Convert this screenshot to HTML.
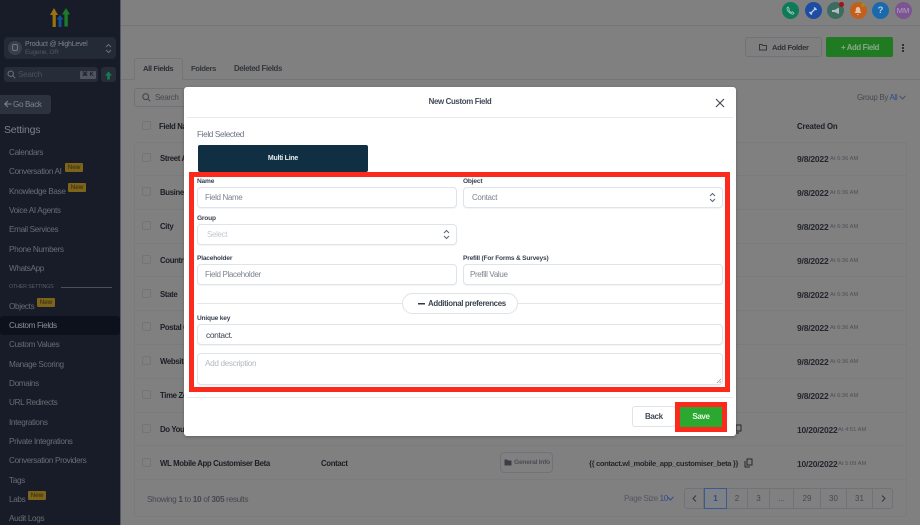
<!DOCTYPE html>
<html><head><meta charset="utf-8"><title>New Custom Field</title>
<style>
*{box-sizing:border-box}
html,body{margin:0;padding:0}
body{width:920px;height:525px;overflow:hidden;position:relative;background:#808081;font-family:"Liberation Sans",sans-serif}
.a,.t{position:absolute}
.t{white-space:nowrap;line-height:12px;height:12px;letter-spacing:-.35px}
.s{font-size:8.2px;color:#686d75;left:9px;margin-top:1px}
.new{position:absolute;background:#7d6418;color:#2c2a18;font-size:6.4px;line-height:9px;height:9px;width:18px;text-align:center;border-radius:1px}
.b{font-weight:bold;font-size:7.8px;color:#1b1e24;left:160px;margin-top:1px}
.d{font-weight:bold;font-size:8.500px;color:#23262c;left:797px;letter-spacing:-.2px;margin-top:.5px}
.m{font-size:5.8px;color:#4c4f55;left:830px;letter-spacing:0;margin-top:1px}
.cb{position:absolute;left:142px;width:9px;height:9px;border:1px solid #727478;border-radius:2px}
.ln{position:absolute;left:134px;width:773px;height:1px;background:#7a7b7d}
.inp{position:absolute;background:#fff;border:1px solid #dfe3ea;border-radius:4px;box-shadow:0 1px 1px rgba(20,30,50,.05)}
.lab{font-size:6.6px;font-weight:bold;color:#3b4350;left:197px;letter-spacing:-.2px}
.ph{font-size:8px;color:#7c8490}
.pg{position:absolute;top:488px;height:21px;border-right:1px solid #6f7279;text-align:center;font-size:8px;line-height:21px;color:#45484f}
.ic{position:absolute;top:2px;width:17px;height:17px;border-radius:50%;text-align:center;color:#b9c4cc;font-size:9px;line-height:17px;font-weight:bold}
</style></head><body>

<!-- app chrome -->
<div class="a" style="left:121px;top:25px;width:799px;height:1px;background:#747578"></div>
<div class="a" style="left:121px;top:79px;width:799px;height:1px;background:#747578"></div>

<!-- sidebar -->
<div class="a" style="left:0;top:0;width:120px;height:525px;background:#171c28"></div>
<div class="a" style="left:120px;top:0;width:1px;height:525px;background:#555b66"></div>
<svg class="a" style="left:48px;top:6px" width="24" height="22" viewBox="0 0 24 22">
<path d="M6 2 10 9H7.800V21H4.600V9H2z" fill="#9a720e"/>
<path d="M18 2 22 8.500H19.800V20.500H16.400V8.500H14z" fill="#1d7a28"/>
<path d="M12 9 15.500 13.500H13.500V21H10.500V13.500H8.500z" fill="#134f93"/>
</svg>
<div class="a" style="left:4px;top:37px;width:112px;height:22px;background:#242a36;border-radius:4px"></div>
<div class="a" style="left:8px;top:41px;width:14px;height:14px;border-radius:50%;background:#3a404b"></div>
<div class="a" style="left:12px;top:44px;width:6px;height:7px;border:1px solid #737780;border-radius:2px"></div>
<div class="t" style="left:25px;top:39px;font-size:7px;color:#7f838b;letter-spacing:-.2px">Product @ HighLevel</div>
<div class="t" style="left:25px;top:47px;font-size:6.4px;color:#545964;letter-spacing:-.15px">Eugene, OR</div>
<svg class="a" style="left:105px;top:43px" width="7" height="11" viewBox="0 0 7 11"><path d="M1 4 3.500 1.500 6 4M1 7 3.500 9.500 6 7" fill="none" stroke="#6a6e77"/></svg>
<div class="a" style="left:4px;top:67px;width:94px;height:15px;background:#262c38;border-radius:3px"></div>
<svg class="a" style="left:7px;top:70px" width="9" height="9" viewBox="0 0 9 9"><circle cx="3.700" cy="3.700" r="2.700" fill="none" stroke="#6d717a"/><path d="M5.800 5.800 8.300 8.300" stroke="#6d717a"/></svg>
<div class="t" style="left:18px;top:68.500px;font-size:8.200px;color:#4d525d">Search</div>
<div class="a" style="left:80px;top:71px;width:16px;height:8px;background:#505560;border-radius:1px;color:#1c2029;font-size:6px;line-height:8px;text-align:center;font-weight:bold">⌘ K</div>
<div class="a" style="left:101px;top:67px;width:15px;height:15px;background:#262c38;border-radius:3px"></div>
<svg class="a" style="left:104px;top:70.500px" width="9" height="9" viewBox="0 0 9 9"><path d="M4.500 .5 8 4.500H5.800V8.500H3.200V4.500H1z" fill="#197a50"/></svg>
<div class="a" style="left:-4px;top:95px;width:55px;height:19px;background:#2c323e;border-radius:3px"></div>
<svg class="a" style="left:4px;top:100px" width="8" height="8" viewBox="0 0 8 8"><path d="M7.500 4H1M3.800 1 .8 4 3.800 7" fill="none" stroke="#80848c" stroke-width="1.100"/></svg>
<div class="t" style="left:13px;top:98.500px;font-size:8.100px;color:#80848c">Go Back</div>
<div class="t" style="left:4px;top:124px;font-size:10.500px;line-height:12px;color:#7c8088;letter-spacing:-.2px">Settings</div>

<div class="t s" style="top:146px">Calendars</div>
<div class="t s" style="top:165px">Conversation AI</div><div class="new" style="left:65px;top:163px">New</div>
<div class="t s" style="top:185px">Knowledge Base</div><div class="new" style="left:68px;top:183px">New</div>
<div class="t s" style="top:204px">Voice AI Agents</div>
<div class="t s" style="top:223px">Email Services</div>
<div class="t s" style="top:243px">Phone Numbers</div>
<div class="t s" style="top:262px">WhatsApp</div>
<div class="t" style="left:9px;top:281px;font-size:5.400px;color:#585d67;letter-spacing:-.2px">OTHER SETTINGS</div>
<div class="a" style="left:61px;top:287px;width:51px;height:1px;background:#4a4f5b"></div>
<div class="t s" style="top:300px">Objects</div><div class="new" style="left:37px;top:298px">New</div>
<div class="a" style="left:0;top:316px;width:120px;height:19px;background:#0d111b;border-radius:3px"></div>
<div class="t s" style="top:319px;color:#8c9097">Custom Fields</div>
<div class="t s" style="top:338px">Custom Values</div>
<div class="t s" style="top:358px">Manage Scoring</div>
<div class="t s" style="top:377px">Domains</div>
<div class="t s" style="top:396px">URL Redirects</div>
<div class="t s" style="top:416px">Integrations</div>
<div class="t s" style="top:435px">Private Integrations</div>
<div class="t s" style="top:454px">Conversation Providers</div>
<div class="t s" style="top:474px">Tags</div>
<div class="t s" style="top:493px">Labs</div><div class="new" style="left:28px;top:491px">New</div>
<div class="t s" style="top:512px">Audit Logs</div>

<!-- top icons -->
<div class="ic" style="left:782px;background:#0f7a58">
<svg width="9" height="9" viewBox="0 0 9 9" style="margin-top:4px"><path d="M2 1 3.300 3 2.700 4C3.300 5.200 4 5.900 5.200 6.500L6.200 5.800 8 7.100C7.600 8 6.700 8.400 5.800 8 3.500 7 1.800 5.300 1 3 .8 2.200 1.200 1.400 2 1z" fill="none" stroke="#a6cfc0" stroke-width=".8"/></svg></div>
<div class="ic" style="left:804.500px;background:#1c4da3">
<svg width="10" height="10" viewBox="0 0 10 10" style="margin-top:3.500px"><path d="M2 8 8 2M1.500 6 4 8.500M6 1.500 8.500 4" stroke="#c3cfe6" stroke-width="1.300" fill="none"/></svg></div>
<div class="ic" style="left:827px;background:#3c6c5f">
<svg width="10" height="10" viewBox="0 0 10 10" style="margin-top:3.500px"><path d="M1 4H3.500L8 1.500V8L3.500 6H1zM3 6 4 9" fill="#aebfb9"/></svg></div>
<div class="a" style="left:838.500px;top:2px;width:5px;height:5px;border-radius:50%;background:#a80f15"></div>
<div class="ic" style="left:849.500px;background:#c2601b">
<svg width="10" height="10" viewBox="0 0 10 10" style="margin-top:3.500px"><path d="M5 1C3.300 1 2.800 2.500 2.800 4 2.800 5.500 2.200 6.200 1.500 7H8.500C7.800 6.200 7.200 5.500 7.200 4 7.200 2.500 6.700 1 5 1zM4 8H6L5 9.300z" fill="#e3c3ae"/></svg></div>
<div class="a" style="left:861px;top:3px;width:4px;height:4px;border-radius:50%;background:#a9861a"></div>
<div class="ic" style="left:872px;background:#1a69ac;color:#b4cde3;font-size:9.500px">?</div>
<div class="ic" style="left:894.500px;background:#7c5491;color:#b6a2c0;font-size:7.500px;font-weight:normal">MM</div>

<!-- action row -->
<div class="a" style="left:745px;top:37px;width:77px;height:20px;border:1px solid #707277;border-radius:3px;background:#7f7f80"></div>
<svg class="a" style="left:759px;top:43px" width="8" height="8" viewBox="0 0 8 8"><path d="M.5 1.500H3L3.800 2.500H7.500V7H.5z" fill="none" stroke="#33363b"/></svg>
<div class="t" style="left:772px;top:41.500px;font-size:7.600px;font-weight:bold;color:#2f3238">Add Folder</div>
<div class="a" style="left:826px;top:37px;width:67px;height:20px;background:#1f7a21;border-radius:2px"></div>
<div class="t" style="left:841px;top:41.500px;font-size:7.800px;font-weight:bold;color:#8ba88c">+ Add Field</div>
<div class="a" style="left:901.500px;top:44px;width:2px;height:2px;background:#2c2f35;box-shadow:0 3px 0 #2c2f35,0 6px 0 #2c2f35"></div>

<!-- tabs -->
<div class="a" style="left:134px;top:58px;width:49px;height:22px;background:#808081;border:1px solid #747578;border-bottom:0;border-radius:3px 3px 0 0"></div>
<div class="t" style="left:143px;top:62.500px;font-size:7.600px;font-weight:bold;color:#2a2d33">All Fields</div>
<div class="t" style="left:191px;top:62.500px;font-size:7.600px;font-weight:bold;color:#33363c">Folders</div>
<div class="t" style="left:234px;top:62.500px;font-size:7.800px;font-weight:bold;color:#33363c">Deleted Fields</div>

<!-- search + group -->
<div class="a" style="left:134px;top:88px;width:60px;height:19px;border:1px solid #707277;border-radius:3px"></div>
<svg class="a" style="left:142px;top:93px" width="9" height="9" viewBox="0 0 9 9"><circle cx="3.700" cy="3.700" r="2.900" fill="none" stroke="#3f4248"/><path d="M5.800 5.800 8.300 8.300" stroke="#3f4248"/></svg>
<div class="t" style="left:155px;top:91.500px;font-size:8.100px;color:#45484e">Search</div>
<div class="t" style="left:857px;top:91.500px;font-size:8px;color:#46494f">Group By <span style="color:#2b4a86">All</span></div>
<svg class="a" style="left:899px;top:95px" width="7" height="5" viewBox="0 0 7 5"><path d="M.5 .8 3.500 4 6.500 .8" fill="none" stroke="#4a4f58"/></svg>

<!-- table -->
<div class="cb" style="top:121px"></div>
<div class="t b" style="left:159px;top:120px">Field Name</div>
<div class="t b" style="left:797px;top:120px;letter-spacing:-.15px">Created On</div>
<div class="a" style="left:134px;top:142px;width:773px;height:375px;border:1px solid #7a7b7d;border-radius:4px"></div>
<div class="ln" style="top:175px"></div><div class="ln" style="top:209px"></div><div class="ln" style="top:243px"></div><div class="ln" style="top:276px"></div><div class="ln" style="top:310px"></div><div class="ln" style="top:344px"></div><div class="ln" style="top:378px"></div><div class="ln" style="top:412px"></div><div class="ln" style="top:445px"></div><div class="ln" style="top:479px"></div>

<div class="cb" style="top:153px"></div><div class="t b" style="top:152px">Street Address</div><div class="t d" style="top:152px">9/8/2022</div><div class="t m" style="top:152px">At 6:36 AM</div>
<div class="cb" style="top:187px"></div><div class="t b" style="top:186px">Business Name</div><div class="t d" style="top:186px">9/8/2022</div><div class="t m" style="top:186px">At 6:36 AM</div>
<div class="cb" style="top:221px"></div><div class="t b" style="top:220px">City</div><div class="t d" style="top:220px">9/8/2022</div><div class="t m" style="top:220px">At 6:36 AM</div>
<div class="cb" style="top:255px"></div><div class="t b" style="top:254px">Country</div><div class="t d" style="top:254px">9/8/2022</div><div class="t m" style="top:254px">At 6:36 AM</div>
<div class="cb" style="top:289px"></div><div class="t b" style="top:288px">State</div><div class="t d" style="top:288px">9/8/2022</div><div class="t m" style="top:288px">At 6:36 AM</div>
<div class="cb" style="top:322px"></div><div class="t b" style="top:321px">Postal Code</div><div class="t d" style="top:321px">9/8/2022</div><div class="t m" style="top:321px">At 6:36 AM</div>
<div class="cb" style="top:356px"></div><div class="t b" style="top:355px">Website</div><div class="t d" style="top:355px">9/8/2022</div><div class="t m" style="top:355px">At 6:36 AM</div>
<div class="cb" style="top:390px"></div><div class="t b" style="top:389px">Time Zone</div><div class="t d" style="top:389px">9/8/2022</div><div class="t m" style="top:389px">At 6:36 AM</div>
<div class="cb" style="top:424px"></div><div class="t b" style="top:423px">Do You</div><div class="t d" style="top:423px">10/20/2022</div><div class="t m" style="left:838px;top:423px">At 4:51 AM</div>
<svg class="a" style="left:733px;top:424px" width="9" height="10" viewBox="0 0 9 10"><path d="M3 1H8V7H3zM1 3V9H6" fill="none" stroke="#26292e"/></svg>
<div class="cb" style="top:458px"></div><div class="t b" style="top:457px">WL Mobile App Customiser Beta</div>
<div class="t b" style="left:321px;top:457px">Contact</div>
<div class="a" style="left:500px;top:452px;width:53px;height:21px;border:1px solid #707277;border-radius:4px"></div>
<svg class="a" style="left:504px;top:459px" width="8" height="7" viewBox="0 0 8 7"><path d="M.5 .5H3L4 1.500H7.500V6.500H.5z" fill="#3b3e44"/></svg>
<div class="t" style="left:514px;top:457px;font-size:6.700px;font-weight:bold;color:#4b4e54;letter-spacing:-.25px">General Info</div>
<div class="t" style="left:589px;top:457.500px;font-size:7.600px;font-weight:bold;color:#24272c">{{ contact.wl_mobile_app_customiser_beta }}</div>
<svg class="a" style="left:744px;top:458px" width="9" height="10" viewBox="0 0 9 10"><path d="M3 1H8V7H3zM1 3V9H6" fill="none" stroke="#26292e"/></svg>
<div class="t d" style="top:457px">10/20/2022</div><div class="t m" style="left:838px;top:457px">At 5:09 AM</div>

<!-- footer pagination -->
<div class="t" style="left:147px;top:492.500px;font-size:8.300px;color:#45484e">Showing <b>1</b> to <b>10</b> of <b>305</b> results</div>
<div class="t" style="left:624px;top:492.500px;font-size:8.100px;color:#54575d">Page Size <span style="color:#2f4d88">10</span></div>
<svg class="a" style="left:667px;top:496px" width="7" height="5" viewBox="0 0 7 5"><path d="M.5 .8 3.500 4 6.500 .8" fill="none" stroke="#2f4d88"/></svg>
<div class="a" style="left:684px;top:488px;width:209px;height:21px;border:1px solid #6f7279;border-radius:3px"></div>
<div class="pg" style="left:684px;width:20px"><svg width="5" height="7" viewBox="0 0 5 7" style="margin-top:7px;display:block;margin-left:8px"><path d="M4 .5 1 3.500 4 6.500" fill="none" stroke="#33363c"/></svg></div>
<div class="pg" style="left:704px;width:23px;border:1px solid #3c5a90;color:#2c4c88;background:#7e8186;font-weight:bold;line-height:19px">1</div>
<div class="pg" style="left:727px;width:21px">2</div>
<div class="pg" style="left:748px;width:22px">3</div>
<div class="pg" style="left:770px;width:24px">...</div>
<div class="pg" style="left:794px;width:27px">29</div>
<div class="pg" style="left:821px;width:26px">30</div>
<div class="pg" style="left:847px;width:26px">31</div>
<div class="pg" style="left:873px;width:20px;border:0"><svg width="5" height="7" viewBox="0 0 5 7" style="margin-top:7px;display:block;margin-left:8px"><path d="M1 .5 4 3.500 1 6.500" fill="none" stroke="#33363c"/></svg></div>

<!-- modal -->
<div class="a" style="left:184px;top:87px;width:552px;height:349px;background:#fff;border-radius:3px;box-shadow:0 1px 3px rgba(0,0,0,.25)"></div>
<div class="t" style="left:184px;width:552px;top:95.500px;text-align:center;font-size:7.900px;font-weight:bold;color:#414a57">New Custom Field</div>
<svg class="a" style="left:715px;top:98px" width="10" height="10" viewBox="0 0 10 10"><path d="M1 1 9 9M9 1 1 9" stroke="#3d4550" stroke-width="1.100"/></svg>
<div class="a" style="left:187px;top:117px;width:546px;height:1px;background:#e8eaee"></div>
<div class="t" style="left:197px;top:129px;font-size:8.200px;color:#687180">Field Selected</div>
<div class="a" style="left:198px;top:145px;width:170px;height:27px;background:#102f42;border-radius:2px"></div>
<div class="t" style="left:198px;width:170px;top:153px;text-align:center;font-size:7px;font-weight:bold;color:#e6ebef;letter-spacing:-.25px">Multi Line</div>

<div class="t lab" style="top:175.500px">Name</div>
<div class="inp" style="left:197px;top:187px;width:260px;height:21px"></div>
<div class="t ph" style="left:205px;top:191.500px">Field Name</div>
<div class="t lab" style="left:463px;top:175.500px">Object</div>
<div class="inp" style="left:463px;top:187px;width:260px;height:21px"></div>
<div class="t ph" style="left:472px;top:191.500px">Contact</div>
<svg class="a" style="left:709px;top:192px" width="7" height="11" viewBox="0 0 7 11"><path d="M1 4 3.500 1.500 6 4M1 7 3.500 9.500 6 7" fill="none" stroke="#5b6470"/></svg>

<div class="t lab" style="top:212.500px">Group</div>
<div class="inp" style="left:197px;top:224px;width:260px;height:21px"></div>
<div class="t ph" style="left:207px;top:228.500px;color:#c3c8d0">Select</div>
<svg class="a" style="left:443px;top:229px" width="7" height="11" viewBox="0 0 7 11"><path d="M1 4 3.500 1.500 6 4M1 7 3.500 9.500 6 7" fill="none" stroke="#5b6470"/></svg>

<div class="t lab" style="top:252.500px">Placeholder</div>
<div class="inp" style="left:197px;top:264px;width:260px;height:21px"></div>
<div class="t ph" style="left:205px;top:268.500px">Field Placeholder</div>
<div class="t lab" style="left:463px;top:252.500px">Prefill (For Forms &amp; Surveys)</div>
<div class="inp" style="left:463px;top:264px;width:260px;height:21px"></div>
<div class="t ph" style="left:470px;top:268.500px">Prefill Value</div>

<div class="a" style="left:197px;top:303px;width:526px;height:1px;background:#e3e6eb"></div>
<div class="a" style="left:402px;top:293px;width:116px;height:21px;background:#fff;border:1px solid #dfe3ea;border-radius:11px"></div>
<div class="a" style="left:418px;top:303px;width:7px;height:1px;background:#2f3846;box-shadow:0 .5px 0 #2f3846"></div>
<div class="t" style="left:428px;top:297.500px;font-size:7.900px;font-weight:bold;color:#3b4452">Additional preferences</div>

<div class="t lab" style="top:312.500px">Unique key</div>
<div class="inp" style="left:197px;top:324px;width:526px;height:21px"></div>
<div class="t" style="left:206px;top:328.500px;font-size:8.400px;color:#3d4551">contact.</div>
<div class="inp" style="left:197px;top:353px;width:526px;height:32px"></div>
<div class="t" style="left:205px;top:357.500px;font-size:8.200px;color:#b3b9c3">Add description</div>
<svg class="a" style="left:716px;top:378px" width="6" height="6" viewBox="0 0 6 6"><path d="M1 5 5 1M3.500 5 5 3.500" stroke="#8c929c" stroke-width=".7"/></svg>

<!-- red highlights -->
<div class="a" style="left:189px;top:172px;width:541px;height:220px;border:5px solid #fb2a1c"></div>
<div class="a" style="left:187px;top:397px;width:546px;height:1px;background:#e8eaee"></div>
<div class="a" style="left:632px;top:406px;width:44px;height:21px;background:#fff;border:1px solid #dfe3ea;border-radius:3px"></div>
<div class="t" style="left:645px;top:410.500px;font-size:8px;font-weight:bold;color:#414a57">Back</div>
<div class="a" style="left:675px;top:402px;width:52px;height:30px;border:5px solid #fb2a1c;background:#2aa82f"></div>
<div class="t" style="left:675px;width:52px;top:411px;text-align:center;font-size:8px;font-weight:bold;color:#eaf6ea">Save</div>
</body></html>
